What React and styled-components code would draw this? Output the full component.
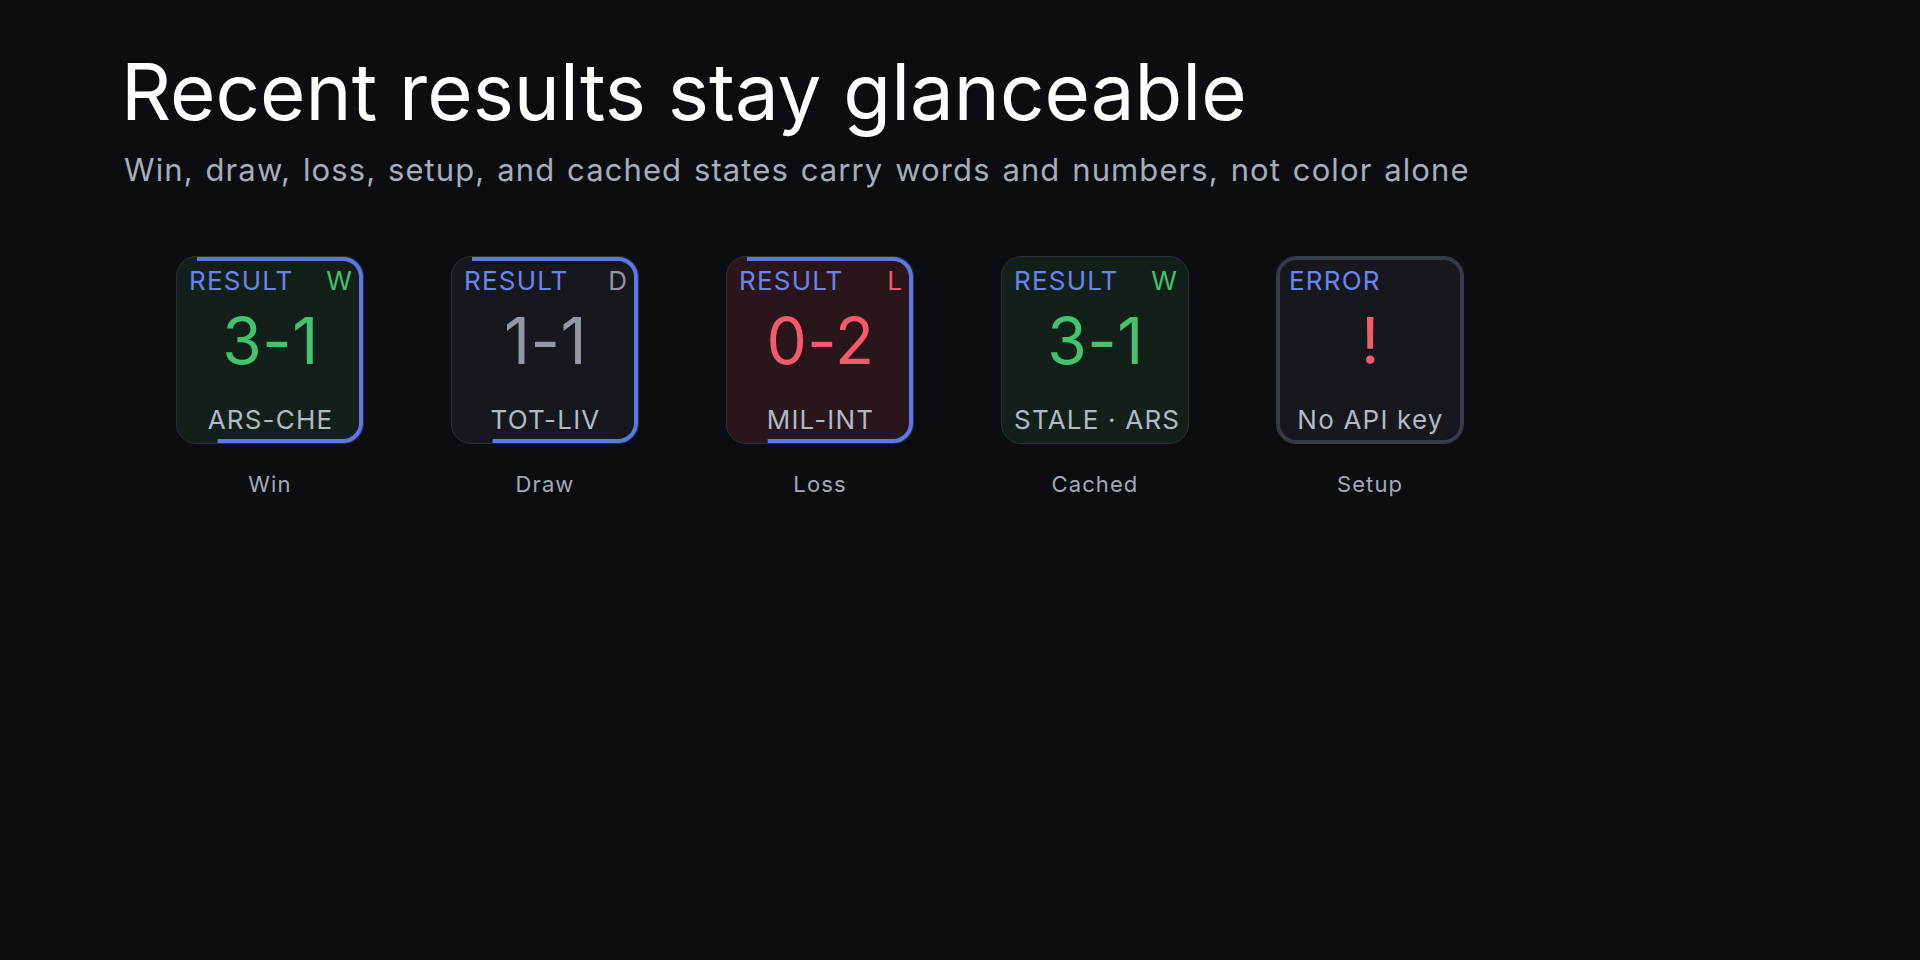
import React from "react";
import styled, { createGlobalStyle, css } from "styled-components";

const Global = createGlobalStyle`
  html, body { margin: 0; padding: 0; background: #0b0d11; }
  body { font-family: Inter, "Noto Sans", sans-serif; color: #fff; }
`;

const Page = styled.main`
  min-height: 960px;
  box-sizing: border-box;
  padding: 49px 120px 0 121px;
  background: #0b0d11;
`;

const Title = styled.h1`
  margin: 0;
  font-size: 78px;
  line-height: 86px;
  font-weight: 400;
  letter-spacing: 0;
  color: #ffffff;
`;

const Subtitle = styled.p`
  margin: 15px 0 0 3px;
  font-size: 31px;
  line-height: 39px;
  font-weight: 400;
  letter-spacing: 1.1px;
  word-spacing: 2px;
  color: #a6adbb;
`;

const Row = styled.section`
  display: flex;
  gap: 87px;
  margin: 67px 0 0 55px;
`;

const Item = styled.div`
  display: flex;
  flex-direction: column;
  align-items: center;
  width: 188px;
`;

const bgs = {
  win: "#13201a",
  loss: "#29161b",
  draw: "#16181e",
  error: "#16181e",
};

const Card = styled.div`
  position: relative;
  box-sizing: border-box;
  width: 188px;
  height: 188px;
  border: 1px solid #2b303a;
  border-radius: 20px;
  background: ${(p) => bgs[p.$tone]};
  padding: 8px 11px 8px 12px;
  display: flex;
  flex-direction: column;
  ${(p) =>
    p.$thick &&
    css`
      border-color: #363c48;
      box-shadow: inset 0 0 0 3px #363c48;
    `}
`;

const Ring = styled.svg`
  position: absolute;
  inset: 0;
  width: 186px;
  height: 186px;
  pointer-events: none;
`;

const Top = styled.div`
  display: flex;
  justify-content: space-between;
  font-size: 26px;
  line-height: 31px;
  letter-spacing: 1.2px;
`;

const Tag = styled.span`
  color: #6b84ef;
`;

const Mark = styled.span`
  color: ${(p) => p.$color};
  margin-right: -1.2px;
`;

const Score = styled.div`
  margin-top: 13px;
  text-align: center;
  font-size: 64px;
  line-height: 64px;
  letter-spacing: 0.5px;
  color: ${(p) => p.$color};
`;

const Bottom = styled.div`
  margin-top: auto;
  text-align: center;
  font-size: 26px;
  line-height: 31px;
  letter-spacing: 1.2px;
  color: #b3b9c5;
  white-space: nowrap;
`;

const Label = styled.div`
  margin-top: 26px;
  font-size: 22px;
  line-height: 29px;
  letter-spacing: 1.1px;
  color: #a3a9b6;
`;

const GREEN = "#41c46c";
const RED = "#f35b6a";
const GREY = "#9298a6";

const items = [
  { tone: "win", tag: "RESULT", mark: "W", markColor: GREEN, score: "3-1", scoreColor: GREEN, bottom: "ARS-CHE", label: "Win", ring: true },
  { tone: "draw", tag: "RESULT", mark: "D", markColor: GREY, score: "1-1", scoreColor: GREY, bottom: "TOT-LIV", label: "Draw", ring: true },
  { tone: "loss", tag: "RESULT", mark: "L", markColor: RED, score: "0-2", scoreColor: RED, bottom: "MIL-INT", label: "Loss", ring: true },
  { tone: "win", tag: "RESULT", mark: "W", markColor: GREEN, score: "3-1", scoreColor: GREEN, bottom: "STALE · ARS", label: "Cached", ring: false },
  { tone: "error", tag: "ERROR", mark: "", markColor: GREY, score: "!", scoreColor: RED, bottom: "No API key", label: "Setup", ring: false, thick: true },
];

function ProgressRing({ value }) {
  return (
    <Ring viewBox="0 0 186 186">
      <rect
        x="2"
        y="2"
        width="182"
        height="182"
        rx="18"
        ry="18"
        fill="none"
        stroke="#5b78e6"
        strokeWidth="4"
        pathLength="100"
        strokeDasharray={`${value} 100`}
      />
    </Ring>
  );
}

export default function App() {
  return (
    <>
      <Global />
      <Page>
        <Title>Recent results stay glanceable</Title>
        <Subtitle>
          Win, draw, loss, setup, and cached states carry words and numbers, not color alone
        </Subtitle>
        <Row>
          {items.map((it) => (
            <Item key={it.label}>
              <Card $tone={it.tone} $thick={it.thick}>
                {it.ring && <ProgressRing value={68} />}
                <Top>
                  <Tag>{it.tag}</Tag>
                  <Mark $color={it.markColor}>{it.mark}</Mark>
                </Top>
                <Score $color={it.scoreColor}>{it.score}</Score>
                <Bottom>{it.bottom}</Bottom>
              </Card>
              <Label>{it.label}</Label>
            </Item>
          ))}
        </Row>
      </Page>
    </>
  );
}
